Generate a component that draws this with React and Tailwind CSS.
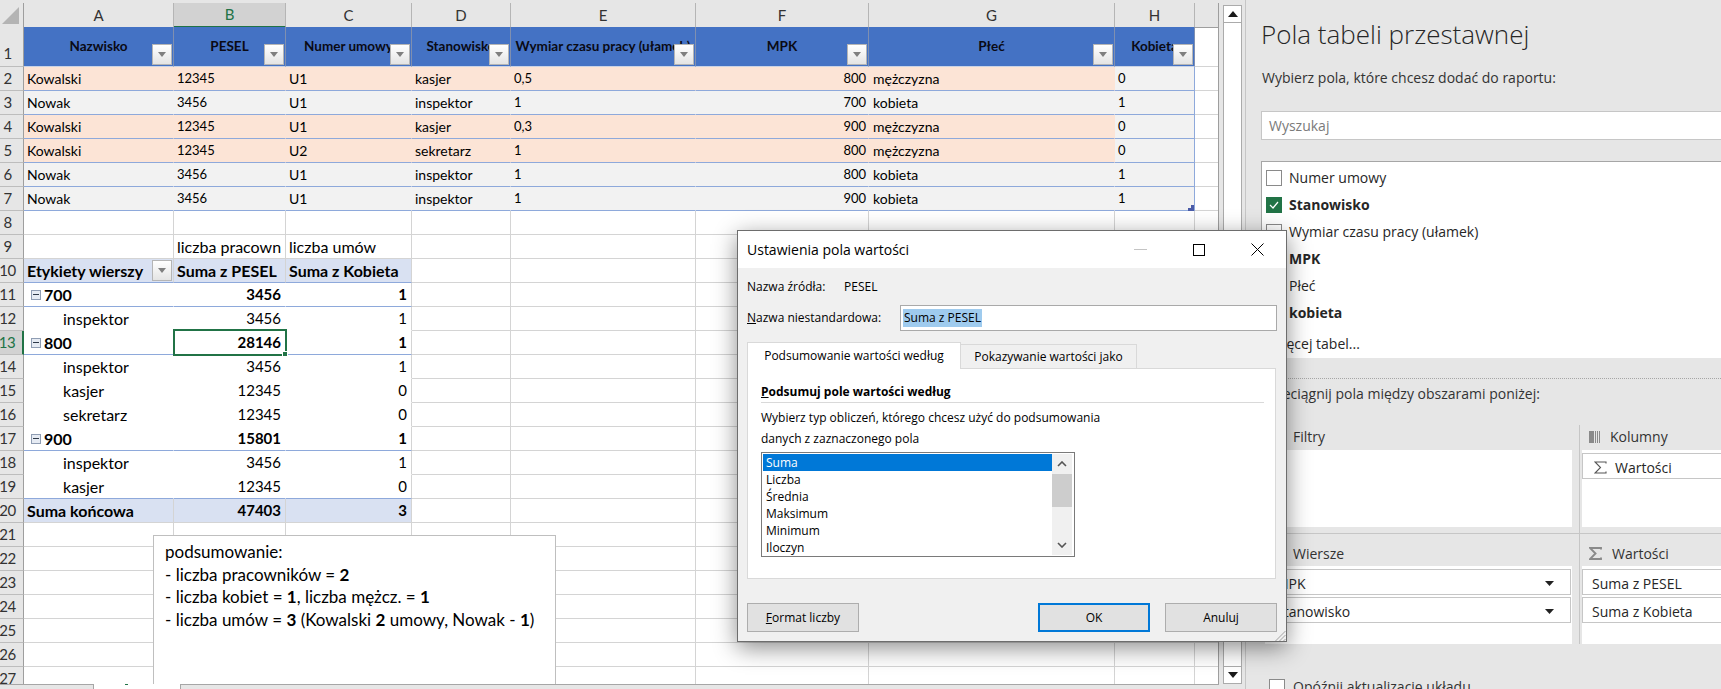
import clsx from "clsx";

const GRID = "grid h-[24px] grid-cols-[24px_150px_112px_126px_99px_185px_173px_246px_80px_24px]";
const XL = "font-['Lato','Liberation_Sans',sans-serif]";
const UI = "font-['Open_Sans','Liberation_Sans',sans-serif]";

const TABLE = [
  ["Kowalski", "12345", "U1", "kasjer", "0,5", "800", "mężczyzna", "0"],
  ["Nowak", "3456", "U1", "inspektor", "1", "700", "kobieta", "1"],
  ["Kowalski", "12345", "U1", "kasjer", "0,3", "900", "mężczyzna", "0"],
  ["Kowalski", "12345", "U2", "sekretarz", "1", "800", "mężczyzna", "0"],
  ["Nowak", "3456", "U1", "inspektor", "1", "800", "kobieta", "1"],
  ["Nowak", "3456", "U1", "inspektor", "1", "900", "kobieta", "1"],
];

const PIVOT = [
  { n: 11, kind: "group", a: "700", b: "3456", c: "1" },
  { n: 12, kind: "item", a: "inspektor", b: "3456", c: "1" },
  { n: 13, kind: "group", a: "800", b: "28146", c: "1" },
  { n: 14, kind: "item", a: "inspektor", b: "3456", c: "1" },
  { n: 15, kind: "item", a: "kasjer", b: "12345", c: "0" },
  { n: 16, kind: "item", a: "sekretarz", b: "12345", c: "0" },
  { n: 17, kind: "group", a: "900", b: "15801", c: "1" },
  { n: 18, kind: "item", a: "inspektor", b: "3456", c: "1" },
  { n: 19, kind: "last", a: "kasjer", b: "12345", c: "0" },
];

const COLUMNS = ["A", "B", "C", "D", "E", "F", "G", "H"];
const HEADERS = ["Nazwisko", "PESEL", "Numer umowy", "Stanowisko", "Wymiar czasu pracy (ułamek)", "MPK", "Płeć", "Kobieta"];
const FIELDS = [
  { label: "Numer umowy" },
  { label: "Stanowisko", bold: true, checked: true },
  { label: "Wymiar czasu pracy (ułamek)" },
  { label: "MPK", bold: true, checked: true },
  { label: "Płeć" },
  { label: "kobieta", bold: true, checked: true },
];

function Cell({ className, children }) {
  return (
    <div className={clsx("flex items-center overflow-hidden whitespace-nowrap border-r border-b border-[#d4d4d4] text-black", className)}>
      {children}
    </div>
  );
}

function RowHead({ n, active, className }) {
  return (
    <div
      className={clsx(
        "flex justify-center overflow-hidden border-b border-[#bdbdbd] pr-[8px] text-[15px] font-normal tracking-[-0.5px] text-[#333]",
        active ? "border-r-2 border-r-[#217346] bg-[#d2d2d2] text-[#217346]" : "border-r border-r-[#9e9e9e] bg-[#e6e6e6]",
        className || "items-center"
      )}
    >
      {n}
    </div>
  );
}

function Blanks({ count }) {
  return Array.from({ length: count }, (_, i) => <Cell key={i} />);
}

function FilterButton() {
  return (
    <span className="absolute right-[1px] bottom-[1px] flex h-[21px] w-[20px] items-center justify-center border border-[#b5b5b5] bg-gradient-to-b from-white to-[#e4e4e4]">
      <svg width="8" height="5" viewBox="0 0 8 5"><path d="M0 0h8L4 5z" fill="#7f7f7f" /></svg>
    </span>
  );
}

function Expander() {
  return (
    <span className="mr-[3px] ml-[7px] flex h-[10px] w-[10px] shrink-0 items-center justify-center border border-[#8f9db3] bg-[#e6ebf3]">
      <span className="h-[1px] w-[6px] bg-[#2f3a4a]" />
    </span>
  );
}

function Triangle({ up, className }) {
  return (
    <svg width="10" height="6" viewBox="0 0 10 6" className={className}>
      <path d={up ? "M0 6h10L5 0z" : "M0 0h10L5 6z"} fill="#1a1a1a" />
    </svg>
  );
}

function Sheet() {
  return (
    <div className={clsx("relative flex w-[1219px] shrink-0 flex-col", XL)}>
      <div className="h-[3px] bg-[#e6e6e6]" />
      <div className="h-[681px] overflow-hidden border-r border-[#9e9e9e] bg-white">
        {/* column letters */}
        <div className={GRID}>
          <div className="flex items-end justify-center border-r border-b border-[#9e9e9e] bg-[#e6e6e6] pr-[3px] pb-[3px]">
            <svg width="17" height="17" viewBox="0 0 17 17"><path d="M17 0v17H0z" fill="#b4b4b4" /></svg>
          </div>
          {COLUMNS.map((c) => (
            <div
              key={c}
              className={clsx(
                "flex items-center justify-center border-r border-[#b5b5b5] text-[15px]",
                c === "B" ? "border-b-2 border-b-[#217346] bg-[#d2d2d2] text-[#217346]" : "border-b border-b-[#9e9e9e] bg-[#e6e6e6] text-[#333]"
              )}
            >
              {c}
            </div>
          ))}
          <div className="border-b border-[#9e9e9e] bg-[#e6e6e6]" />
        </div>

        {/* table headers, row 1 */}
        <div className={clsx(GRID, "h-[40px]")}>
          <RowHead n={1} className="items-end pb-[2px]" />
          {HEADERS.map((h) => (
            <div key={h} className="relative flex items-center justify-center overflow-hidden whitespace-nowrap border-r border-b border-r-[#7f8fb0] border-b-[#c9d3e6] bg-[#4472c4] text-[13.5px] font-bold text-[#0a0a14]">
              {h}
              <FilterButton />
            </div>
          ))}
          <Cell />
        </div>

        {/* table rows 2-7 */}
        {TABLE.map((row, r) => {
          const tint = row[0] === "Kowalski" ? "bg-[#fce4d6]" : "bg-[#f2f2f2]";
          return (
            <div key={r} className={clsx(GRID, "relative")}>
              <RowHead n={r + 2} />
              {row.map((v, i) => (
                <Cell
                  key={i}
                  className={clsx(
                    "border-b-[#8ea9db]",
                    i === 7 ? "border-r-[#8ea9db] bg-[#f2f2f2]" : clsx("border-r-transparent", tint),
                    i === 5 ? "justify-end pr-[2px]" : "pl-[3px]",
                    i === 6 && "pl-[4px]",
                    [1, 4, 5, 7].includes(i) ? "pt-[1px] text-[13px]" : "text-[14px]"
                  )}
                >
                  {v}
                </Cell>
              ))}
              <Cell />
              {r === 5 && (
                <svg width="6" height="6" viewBox="0 0 6 6" className="absolute top-[18px] left-[1188px]">
                  <path d="M6 0v6H0V3h3V0z" fill="#4a5ba8" />
                </svg>
              )}
            </div>
          );
        })}

        {/* row 8 */}
        <div className={GRID}>
          <RowHead n={8} />
          <Blanks count={9} />
        </div>

        {/* row 9 */}
        <div className={clsx(GRID, "text-[16px]")}>
          <RowHead n={9} />
          <Cell />
          <Cell className="pl-[3px]">liczba pracown</Cell>
          <Cell className="pl-[3px]">liczba umów</Cell>
          <Blanks count={6} />
        </div>

        {/* pivot head */}
        <div className={clsx(GRID, "text-[16px] font-bold")}>
          <RowHead n={10} />
          <Cell className="relative border-0 border-b border-b-[#8ea9db] bg-[#d9e1f2] pl-[3px]">
            Etykiety wierszy
            <FilterButton />
          </Cell>
          <Cell className="border-0 border-b border-b-[#8ea9db] bg-[#d9e1f2] pl-[3px]">Suma z PESEL</Cell>
          <Cell className="border-0 border-b border-r border-b-[#8ea9db] bg-[#d9e1f2] pl-[3px]">Suma z Kobieta</Cell>
          <Blanks count={6} />
        </div>

        {/* pivot body */}
        {PIVOT.map((p) => {
          const line = p.kind === "item" ? "border-b-transparent" : "border-b-[#8ea9db]";
          const bold = p.kind === "group" && "font-bold";
          return (
            <div key={p.n} className={clsx(GRID, "text-[15px]")}>
              <RowHead n={p.n} active={p.n === 13} />
              <Cell className={clsx("border-r-transparent text-[16px]", line, bold)}>
                {p.kind === "group" ? <Expander /> : <span className="w-[39px]" />}
                {p.a}
              </Cell>
              <Cell className={clsx("justify-end border-r-transparent pr-[4px]", line, bold)}>{p.b}</Cell>
              <Cell className={clsx("justify-end pr-[4px]", line, bold)}>{p.c}</Cell>
              <Blanks count={6} />
            </div>
          );
        })}

        {/* grand total */}
        <div className={clsx(GRID, "text-[15px] font-bold")}>
          <RowHead n={20} />
          <Cell className="border-0 bg-[#d9e1f2] pl-[3px] text-[16px]">Suma końcowa</Cell>
          <Cell className="justify-end border-0 bg-[#d9e1f2] pr-[4px]">47403</Cell>
          <Cell className="justify-end border-0 bg-[#d9e1f2] pr-[4px]">3</Cell>
          <Blanks count={6} />
        </div>

        {/* empty rows */}
        {[21, 22, 23, 24, 25, 26, 27].map((n) => (
          <div key={n} className={GRID}>
            <RowHead n={n} />
            <Blanks count={9} />
          </div>
        ))}
      </div>

      {/* sheet tabs */}
      <div className="flex h-[5px] bg-[#e6e6e6]">
        <div className="w-[94px] border-t border-r border-[#a6a6a6]" />
        <div className="relative w-[86px] bg-white">
          <span className="absolute top-0 left-[31px] h-[1px] w-[3px] bg-[#217346]" />
        </div>
        <div className="flex-1 border-t border-l border-[#a6a6a6]" />
      </div>

      {/* selected cell B13 */}
      <div className="absolute top-[329px] left-[173px] h-[27px] w-[114px] border-2 border-[#217346]">
        <span className="absolute -right-[3px] -bottom-[3px] h-[6px] w-[6px] border border-white bg-[#217346]" />
      </div>

      {/* text box */}
      <div className="absolute top-[535px] left-[153px] h-[149px] w-[403px] border border-b-0 border-[#bfbfbf] bg-white px-[11px] pt-[5px] text-[17px] leading-[22.5px] text-black">
        <p>podsumowanie:</p>
        <p>- liczba pracowników = <b>2</b></p>
        <p>- liczba kobiet = <b>1</b>, liczba mężcz. = <b>1</b></p>
        <p>- liczba umów = <b>3</b> (Kowalski <b>2</b> umowy, Nowak - <b>1</b>)</p>
      </div>
    </div>
  );
}

function VScroll() {
  return (
    <div className="flex w-[26px] shrink-0 flex-col bg-[#e6e6e6] pt-[5px] pb-[5px] pl-[4px]">
      <div className="flex h-[679px] w-[19px] flex-col justify-between border-x border-[#ababab] bg-white">
        <div className="flex h-[18px] items-center justify-center border-y border-[#ababab] bg-white">
          <Triangle up />
        </div>
        <div className="flex h-[18px] items-center justify-center border-y border-[#ababab] bg-white">
          <Triangle />
        </div>
      </div>
    </div>
  );
}

function CheckBox({ checked, className }) {
  return (
    <span
      className={clsx(
        "flex h-[16px] w-[16px] shrink-0 items-center justify-center border",
        checked ? "border-[#217346] bg-[#217346]" : "border-[#8a8a8a] bg-white",
        className
      )}
    >
      {checked && (
        <svg width="10" height="8" viewBox="0 0 10 8" fill="none" stroke="white" strokeWidth="1.2">
          <path d="M1 4l3 3 5-6" />
        </svg>
      )}
    </span>
  );
}

function AreaItem({ children, arrow, className }) {
  return (
    <div className={clsx("flex h-[26px] items-center border border-[#c6c6c6] bg-white pt-[2px] text-[14px] text-[#262626]", className)}>
      {children}
      {arrow && (
        <svg width="9" height="5" viewBox="0 0 9 5" className="mr-[16px] ml-auto"><path d="M0 0h9L4.5 5z" fill="#222" /></svg>
      )}
    </div>
  );
}

function SigmaIcon({ className, color = "#8a8a8a", width = "1.4" }) {
  return (
    <svg width="13" height="13" viewBox="0 0 13 13" fill="none" stroke={color} strokeWidth={width} className={className}>
      <path d="M12 2.5V1H1l5.5 5.5L1 12h11v-1.5" />
    </svg>
  );
}

function FieldPanel() {
  return (
    <div className={clsx("h-full w-[476px] shrink-0 overflow-hidden border-l border-[#c6c6c6] bg-[#e6e6e6] pl-[15px] text-[#333]", UI)}>
      <h1 className="flex h-[67px] items-center whitespace-nowrap pt-[2px] text-[26px] font-light text-[#262626]">Pola tabeli przestawnej</h1>
      <p className="flex h-[22px] items-center whitespace-nowrap pb-[2px] pl-[1px] text-[14px]">Wybierz pola, które chcesz dodać do raportu:</p>

      <div className="mt-[22px] flex h-[29px] w-[480px] items-center border border-[#c6c6c6] bg-white pl-[7px] text-[14px] text-[#7a7a7a]">Wyszukaj</div>

      <div className="mt-[21px] h-[197px] w-[480px] border-t border-l border-[#a6a6a6] bg-white pt-[2px] pl-[4px] text-[14px] text-[#262626]">
        {FIELDS.map((f) => (
          <div key={f.label} className={clsx("flex h-[27px] items-center gap-[7px]", f.bold && "font-bold")}>
            <CheckBox checked={f.checked} />
            {f.label}
          </div>
        ))}
        <div className="mt-[4px] flex h-[27px] items-center pl-[4px]">Więcej tabel...</div>
      </div>

      <div className="mt-[20px] h-[1px] border-t border-dotted border-[#a6a6a6]" />
      <p className="mt-[4px] flex h-[22px] items-center whitespace-nowrap pb-[2px] pl-[1px] text-[14px]">Przeciągnij pola między obszarami poniżej:</p>

      <div className="mt-[20px] ml-[4px] w-[460px] text-[14px]">
        <div className="flex h-[109px] border-b border-[#c6c6c6]">
          <div className="w-[307px] shrink-0">
            <div className="flex h-[25px] items-center pb-[2px] pl-[28px]">Filtry</div>
            <div className="h-[77px] bg-white" />
          </div>
          <div className="w-[8px] shrink-0 border-r border-[#c6c6c6]" />
          <div className="flex-1 pl-[2px]">
            <div className="flex h-[25px] items-center gap-[10px] pb-[2px] pl-[7px]">
              <svg width="11" height="12" viewBox="0 0 11 12" fill="#8a8a8a">
                <path d="M0 0h5v12H0zM6 0h1v12H6zM8 0h1v12H8zM10 0h1v12h-1z" />
              </svg>
              Kolumny
            </div>
            <div className="h-[77px] bg-white pt-[3px]">
              <AreaItem className="h-[24px] pl-[11px]">
                <SigmaIcon color="#555" width="1.1" className="mr-[8px]" />
                Wartości
              </AreaItem>
            </div>
          </div>
        </div>
        <div className="flex h-[110px]">
          <div className="w-[307px] shrink-0 pt-[7px]">
            <div className="flex h-[25px] items-center pl-[28px]">Wiersze</div>
            <div className="h-[78px] bg-white pt-[3px] pr-[1px]">
              <AreaItem arrow className="pl-[10px]">MPK</AreaItem>
              <AreaItem arrow className="mt-[2px] pl-[10px]">Stanowisko</AreaItem>
            </div>
          </div>
          <div className="w-[8px] shrink-0 border-r border-[#c6c6c6]" />
          <div className="flex-1 pt-[7px] pl-[2px]">
            <div className="flex h-[25px] items-center gap-[10px] pl-[7px]">
              <SigmaIcon width="1.9" />
              Wartości
            </div>
            <div className="h-[78px] bg-white pt-[3px]">
              <AreaItem className="pl-[9px]">Suma z PESEL</AreaItem>
              <AreaItem className="mt-[2px] pl-[9px]">Suma z Kobieta</AreaItem>
            </div>
          </div>
        </div>
      </div>

      <div className="mt-[32px] ml-[8px] flex items-center gap-[8px] whitespace-nowrap text-[14px]">
        <CheckBox />
        Opóźnij aktualizację układu
      </div>
    </div>
  );
}

function ValueDialog() {
  const types = ["Suma", "Liczba", "Średnia", "Maksimum", "Minimum", "Iloczyn"];
  return (
    <div className={clsx("absolute top-[230px] left-[737px] h-[412px] w-[550px] border border-[#6d6d6d] bg-[#f0f0f0] text-[12px] text-black shadow-[0_6px_22px_rgba(0,0,0,0.45)]", UI)}>
      <div className="flex h-[37px] items-center bg-white pl-[9px] text-[14px]">
        Ustawienia pola wartości
        <span className="ml-auto h-[1px] w-[13px] bg-[#c4c4c4]" />
        <span className="ml-[46px] h-[12px] w-[12px] border border-black" />
        <svg width="13" height="13" viewBox="0 0 13 13" stroke="black" className="mr-[22px] ml-[46px]">
          <path d="M0.5 0.5l12 12M12.5 0.5l-12 12" />
        </svg>
      </div>

      <div className="px-[9px]">
        <div className="flex h-[37px] items-center">
          <span className="w-[97px]">Nazwa źródła:</span>
          PESEL
        </div>
        <div className="flex h-[26px] items-center">
          <span className="w-[153px]"><u>N</u>azwa niestandardowa:</span>
          <div className="flex h-full flex-1 items-center border border-[#a9a9a9] bg-white pl-[2px]">
            <span className="bg-[#9fcbee] px-[1px]">Suma z PESEL</span>
          </div>
        </div>

        <div className="mt-[11px] flex h-[27px] w-[529px] items-end">
          <div className="flex h-[27px] w-[214px] items-center justify-center border border-b-0 border-[#d9d9d9] bg-white">Podsumowanie wartości według</div>
          <div className="flex h-[25px] w-[176px] items-center justify-center border-t border-r border-b border-[#d9d9d9] bg-[#f0f0f0] pt-[1px]">Pokazywanie wartości jako</div>
          <div className="flex-1 border-b border-[#d9d9d9]" />
        </div>

        <div className="h-[210px] w-[529px] border border-t-0 border-[#d9d9d9] bg-white pr-[11px] pl-[13px]">
          <div className="flex h-[34px] items-center border-b border-[#d9d9d9] pt-[12px] font-bold"><span><u>P</u>odsumuj pole wartości według</span></div>
          <div className="mt-[4px] flex h-[21px] items-center whitespace-nowrap">Wybierz typ obliczeń, którego chcesz użyć do podsumowania</div>
          <div className="flex h-[21px] items-center">danych z zaznaczonego pola</div>
          <div className="mt-[3px] flex h-[105px] w-[314px] border border-[#7a7a7a] p-[1px]">
            <div className="w-[289px] overflow-hidden">
              {types.map((t, i) => (
                <div key={t} className={clsx("flex h-[17px] items-center pl-[3px]", i === 0 && "bg-[#0078d7] text-white")}>{t}</div>
              ))}
            </div>
            <div className="flex w-[20px] flex-col bg-[#f0f0f0]">
              <div className="flex h-[20px] items-center justify-center">
                <svg width="10" height="6" viewBox="0 0 10 6" fill="none" stroke="#555" strokeWidth="1.6"><path d="M1 5l4-4 4 4" /></svg>
              </div>
              <div className="h-[33px] bg-[#cdcdcd]" />
              <div className="mt-auto flex h-[20px] items-center justify-center">
                <svg width="10" height="6" viewBox="0 0 10 6" fill="none" stroke="#555" strokeWidth="1.6"><path d="M1 1l4 4 4-4" /></svg>
              </div>
            </div>
          </div>
        </div>

        <div className="mt-[24px] flex h-[29px]">
          <div className="flex w-[112px] items-center justify-center border border-[#adadad] bg-[#e1e1e1]"><span><u>F</u>ormat liczby</span></div>
          <div className="ml-auto flex w-[112px] items-center justify-center border-2 border-[#0078d7] bg-[#e1e1e1]">OK</div>
          <div className="ml-[15px] flex w-[112px] items-center justify-center border border-[#adadad] bg-[#e1e1e1]">Anuluj</div>
        </div>
      </div>

      <svg width="11" height="11" viewBox="0 0 11 11" stroke="#a0a0a0" className="absolute right-0 bottom-0">
        <path d="M10.5 1l-10 10M10.5 5l-6 6M10.5 9l-2 2" />
      </svg>
    </div>
  );
}

export default function App() {
  return (
    <div className="relative flex h-[689px] w-[1721px] overflow-hidden bg-[#e6e6e6]">
      <Sheet />
      <VScroll />
      <FieldPanel />
      <ValueDialog />
    </div>
  );
}
